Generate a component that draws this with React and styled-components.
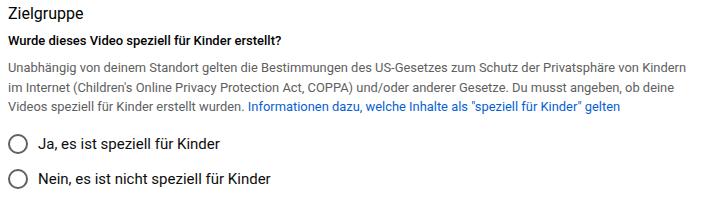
import React, { useState } from 'react'
import styled, { createGlobalStyle } from 'styled-components'

const Global = createGlobalStyle`
	body {
		margin: 0;
		background: #fff;
		font-family: Roboto, "Noto Sans", Arial, sans-serif;
	}
`

const Section = styled.section`
	padding: 2px 8px 0 8px;
	width: 686px;
`

const Title = styled.h2`
	margin: 0;
	font-size: 16px;
	font-weight: 400;
	line-height: 24px;
	color: #030303;
`

const Question = styled.h3`
	margin: 6px 0 0;
	font-size: 13px;
	font-weight: 500;
	line-height: 18px;
	color: #030303;
`

const Description = styled.p`
	margin: 8px 0 0;
	font-size: 12.9px;
	line-height: 19.5px;
	color: #606060;
	a {
		color: #065fd4;
		text-decoration: none;
	}
`

const Options = styled.div`
	display: flex;
	flex-direction: column;
	gap: 11px;
	margin-top: 15px;
`

const Option = styled.label`
	display: flex;
	align-items: center;
	gap: 10px;
	height: 24px;
	font-size: 15px;
	color: #0d0d0d;
	cursor: pointer;
`

const Circle = styled.span`
	box-sizing: border-box;
	width: 20px;
	height: 20px;
	border-radius: 50%;
	border: 2px solid ${({ checked }) => (checked ? '#065fd4' : '#606060')};
	display: flex;
	align-items: center;
	justify-content: center;
	&::after {
		content: '';
		width: 10px;
		height: 10px;
		border-radius: 50%;
		background: #065fd4;
		display: ${({ checked }) => (checked ? 'block' : 'none')};
	}
`

const options = ['Ja, es ist speziell für Kinder', 'Nein, es ist nicht speziell für Kinder']

export default () => {
	const [ choice, setChoice ] = useState(null)
	return (
		<>
			<Global />
			<Section>
				<Title>Zielgruppe</Title>
				<Question>Wurde dieses Video speziell für Kinder erstellt?</Question>
				<Description>
					Unabhängig von deinem Standort gelten die Bestimmungen des US-Gesetzes zum Schutz der Privatsphäre von Kindern im Internet (Children's Online Privacy Protection Act, COPPA) und/oder anderer Gesetze. Du musst angeben, ob deine Videos speziell für Kinder erstellt wurden. <a href="#">Informationen dazu, welche Inhalte als "speziell für Kinder" gelten</a>
				</Description>
				<Options>
					{options.map((text, i) => (
						<Option key={i} onClick={() => setChoice(i)}>
							<Circle checked={choice === i} />
							{text}
						</Option>
					))}
				</Options>
			</Section>
		</>
	)
}
